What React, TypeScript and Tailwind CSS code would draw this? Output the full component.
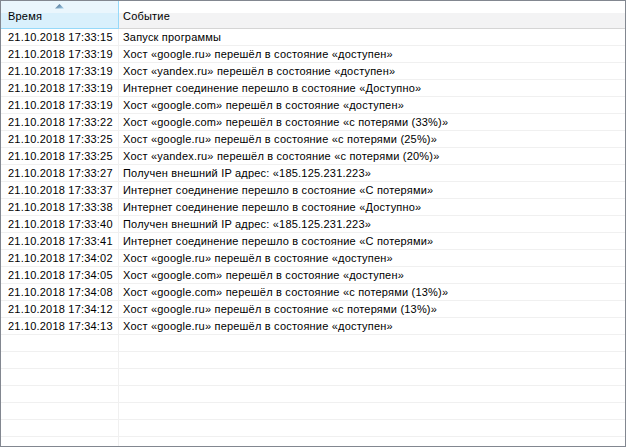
const rows: [string, string][] = [
  ["21.10.2018 17:33:15", "Запуск программы"],
  ["21.10.2018 17:33:19", "Хост «google.ru» перешёл в состояние «доступен»"],
  ["21.10.2018 17:33:19", "Хост «yandex.ru» перешёл в состояние «доступен»"],
  ["21.10.2018 17:33:19", "Интернет соединение перешло в состояние «Доступно»"],
  ["21.10.2018 17:33:19", "Хост «google.com» перешёл в состояние «доступен»"],
  ["21.10.2018 17:33:22", "Хост «google.com» перешёл в состояние «с потерями (33%)»"],
  ["21.10.2018 17:33:25", "Хост «google.ru» перешёл в состояние «с потерями (25%)»"],
  ["21.10.2018 17:33:25", "Хост «yandex.ru» перешёл в состояние «с потерями (20%)»"],
  ["21.10.2018 17:33:27", "Получен внешний IP адрес: «185.125.231.223»"],
  ["21.10.2018 17:33:37", "Интернет соединение перешло в состояние «С потерями»"],
  ["21.10.2018 17:33:38", "Интернет соединение перешло в состояние «Доступно»"],
  ["21.10.2018 17:33:40", "Получен внешний IP адрес: «185.125.231.223»"],
  ["21.10.2018 17:33:41", "Интернет соединение перешло в состояние «С потерями»"],
  ["21.10.2018 17:34:02", "Хост «google.ru» перешёл в состояние «доступен»"],
  ["21.10.2018 17:34:05", "Хост «google.com» перешёл в состояние «доступен»"],
  ["21.10.2018 17:34:08", "Хост «google.com» перешёл в состояние «с потерями (13%)»"],
  ["21.10.2018 17:34:12", "Хост «google.ru» перешёл в состояние «с потерями (13%)»"],
  ["21.10.2018 17:34:13", "Хост «google.ru» перешёл в состояние «доступен»"],
];

const filler = Array.from({ length: 8 }, () => ["", ""] as [string, string]);

export default function App() {
  const all = [...rows, ...filler];

  return (
    <div
      className="w-[626px] h-[447px] bg-white border border-[#828790] overflow-hidden flex flex-col text-[11px] tracking-[0.2px] text-black"
      style={{ fontFamily: '"Liberation Sans", Tahoma, sans-serif' }}
    >
      {/* header */}
      <div className="flex h-[28px] shrink-0">
        <div className="relative w-[118px] shrink-0 border-b border-r border-[#96d9f9] bg-[linear-gradient(#eaf6fd_0%,#eaf6fd_45%,#d9f0fc_45%,#d9f0fc_100%)] pl-[7px] pt-[9px] leading-[13px]">
          <svg
            width="9"
            height="5"
            viewBox="0 0 9 5"
            className="absolute left-[54px] top-[3px]"
          >
            <defs>
              <linearGradient id="sortArrow" x1="0" y1="0" x2="1" y2="1">
                <stop offset="0" stopColor="#3c5e80" />
                <stop offset="1" stopColor="#a8d4ef" />
              </linearGradient>
            </defs>
            <polygon points="4.5,0 9,4.5 0,4.5" fill="url(#sortArrow)" />
          </svg>
          Время
        </div>
        <div className="flex-1 border-b border-[#d5d5d5] bg-[linear-gradient(#ffffff_0%,#ffffff_45%,#f3f3f4_45%,#f3f3f4_100%)] pl-[4px] pt-[9px] leading-[13px]">
          Событие
        </div>
      </div>

      {/* rows */}
      {all.map(([time, event], i) => (
        <div key={i} className="flex h-[17px] shrink-0 border-b border-[#f0f0f0]">
          <div className="w-[118px] shrink-0 border-r border-[#f0f0f0] pl-[7px] leading-[16px] whitespace-nowrap">
            {time}
          </div>
          <div className="flex-1 pl-[4px] leading-[16px] whitespace-nowrap">{event}</div>
        </div>
      ))}
    </div>
  );
}
